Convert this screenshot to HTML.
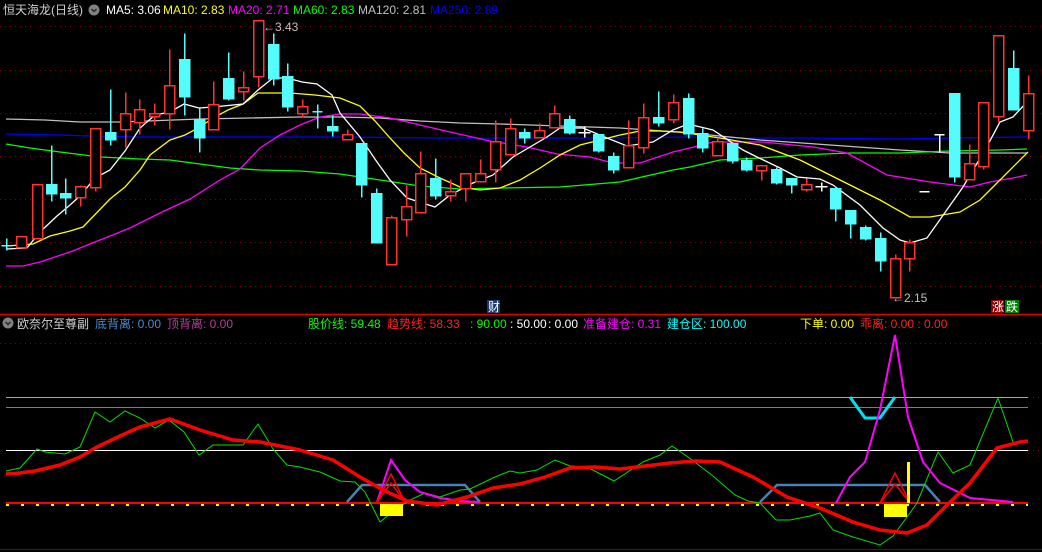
<!DOCTYPE html>
<html><head><meta charset="utf-8"><style>
html,body{margin:0;padding:0;background:#000;width:1042px;height:552px;overflow:hidden}
svg{display:block}
text{font-family:"Liberation Sans","Noto Sans CJK SC",sans-serif;font-size:12px}
</style></head><body>
<svg width="1042" height="552" viewBox="0 0 1042 552" xmlns="http://www.w3.org/2000/svg">
<rect width="1042" height="552" fill="#000"/>
<g stroke="#8a0000" stroke-width="1" stroke-dasharray="1,4">
<line x1="0" y1="26.5" x2="1042" y2="26.5"/><line x1="0" y1="70.5" x2="1042" y2="70.5"/><line x1="0" y1="113.5" x2="1042" y2="113.5"/><line x1="0" y1="156.5" x2="1042" y2="156.5"/><line x1="0" y1="199.5" x2="1042" y2="199.5"/><line x1="0" y1="242.5" x2="1042" y2="242.5"/><line x1="0" y1="286.5" x2="1042" y2="286.5"/>
<line x1="0" y1="343.5" x2="1042" y2="343.5"/><line x1="1028" y1="397.5" x2="1042" y2="397.5"/><line x1="1028" y1="450.5" x2="1042" y2="450.5"/>
</g>
<g fill="none" stroke-width="1.3">
<polyline stroke="#0000ff" points="6,134 60,135 90,136 140,137 240,137 340,137 440,138 600,138 690,137 750,138 800,138 900,139 950,138 1027,137"/>
<polyline stroke="#c0c0c0" points="6,119 45,120 80,122 120,122 200,119 250,118 300,117 340,117 380,118 420,121 460,123 500,124 560,126 620,128 690,133 760,140 830,145 900,150 950,153 1027,153"/>
<polyline stroke="#00ff00" points="6,144 30,148 60,152 100,157 140,159 170,160 200,164 230,168 260,170 300,171 340,174 380,180 420,186 460,189 500,188 560,187 620,182 673,170 690,167 720,160 760,158 800,155 850,153 900,153 950,151 1000,150 1027,149"/>
<polyline stroke="#ff00ff" points="6,266 23,266 40,262 70,252 100,240 130,228 160,213 190,199 220,180 240,169 260,148 280,135 300,125 320,117 340,114 360,114 390,118 420,125 450,132 490,141 527,147 557,154 590,157 613,163 640,163 673,152 690,148 713,142 763,142 813,147 847,153 887,175 930,182 970,187 990,182 1013,178 1027,175"/>
<polyline stroke="#ffff00" points="6,246 33,244 50,236 70,231 83,227 110,199 125,187 140,170 150,155 170,140 185,135 200,127 213,118 228,110 243,104 258,93 273,93 290,93 315,95 340,98 360,106 375,121 390,138 404,153 420,168 440,178 460,187 480,190 500,188 520,180 540,168 560,155 580,145 600,140 620,135 640,131 660,131 680,132 720,138 760,145 800,160 840,180 880,200 910,217 930,217 960,212 980,200 1000,180 1028,152"/>
<polyline stroke="#ffffff" points="6,249 27,248 40,232 57,216 70,205 80,196 95,178 110,170 125,151 140,128 155,115 170,112 184,104 199,108 213,107 243,104 258,90 273,78 287,78 302,82 317,84 332,95 340,113 360,137 377,162 390,180 407,198 435,207 450,195 473,183 493,175 513,157 530,147 547,137 560,128 583,128 607,138 627,146 653,142 673,130 688,124 713,130 743,150 757,157 780,168 797,177 820,179 833,185 860,205 883,228 900,240 910,243 927,238 963,187 985,150 1000,122 1013,117 1027,102"/>
</g>
<g stroke-width="1.5" shape-rendering="crispEdges" transform="translate(0.5,0.5)">
<g stroke="#54fcfc"><line x1="1" y1="245" x2="12" y2="245"/><line x1="6" y1="238" x2="6" y2="250"/></g>
<g stroke="#ff3232" fill="#000">
<line x1="21" y1="236" x2="21" y2="247"/><rect x="16" y="236" width="10" height="11"/>
<rect x="32" y="184" width="10" height="54"/>
<line x1="80" y1="185" x2="80" y2="206"/><rect x="75" y="186" width="10" height="11"/>
<line x1="95" y1="128" x2="95" y2="191"/><rect x="90" y="128" width="10" height="59"/>
<line x1="125" y1="92" x2="125" y2="147"/><rect x="120" y="113" width="10" height="16"/>
<line x1="139" y1="99" x2="139" y2="134"/><rect x="134" y="109" width="10" height="13"/>
<line x1="154" y1="103" x2="154" y2="125"/><rect x="149" y="113" width="10" height="3"/>
<line x1="169" y1="49" x2="169" y2="129"/><rect x="164" y="85" width="10" height="28"/>
<line x1="213" y1="81" x2="213" y2="129"/><rect x="208" y="104" width="10" height="25"/>
<line x1="243" y1="71" x2="243" y2="100"/><rect x="238" y="87" width="10" height="4"/>
<line x1="258" y1="20" x2="258" y2="87"/><rect x="253" y="20" width="10" height="56"/>
<line x1="302" y1="99" x2="302" y2="117"/><rect x="297" y="106" width="10" height="7"/>
<line x1="347" y1="129" x2="347" y2="139"/><rect x="342" y="134" width="10" height="5"/>
<line x1="391" y1="215" x2="391" y2="264"/><rect x="386" y="217" width="10" height="47"/>
<line x1="406" y1="185" x2="406" y2="236"/><rect x="401" y="206" width="10" height="13"/>
<line x1="420" y1="151" x2="420" y2="212"/><rect x="415" y="173" width="10" height="39"/>
<line x1="450" y1="179" x2="450" y2="201"/><rect x="445" y="191" width="10" height="4"/>
<line x1="465" y1="173" x2="465" y2="201"/><rect x="460" y="173" width="10" height="15"/>
<line x1="480" y1="159" x2="480" y2="181"/><rect x="475" y="173" width="10" height="8"/>
<line x1="495" y1="120" x2="495" y2="182"/><rect x="490" y="141" width="10" height="28"/>
<line x1="510" y1="118" x2="510" y2="154"/><rect x="505" y="128" width="10" height="26"/>
<line x1="539" y1="123" x2="539" y2="137"/><rect x="534" y="130" width="10" height="7"/>
<line x1="554" y1="105" x2="554" y2="127"/><rect x="549" y="113" width="10" height="14"/>
<line x1="628" y1="120" x2="628" y2="167"/><rect x="623" y="145" width="10" height="22"/>
<line x1="643" y1="103" x2="643" y2="153"/><rect x="638" y="117" width="10" height="30"/>
<line x1="673" y1="94" x2="673" y2="123"/><rect x="668" y="102" width="10" height="17"/>
<line x1="717" y1="137" x2="717" y2="155"/><rect x="712" y="141" width="10" height="14"/>
<line x1="761" y1="165" x2="761" y2="180"/><rect x="756" y="165" width="10" height="5"/>
<line x1="806" y1="178" x2="806" y2="191"/><rect x="801" y="184" width="10" height="5"/>
<line x1="895" y1="254" x2="895" y2="297"/><rect x="890" y="258" width="10" height="39"/>
<line x1="909" y1="239" x2="909" y2="271"/><rect x="904" y="242" width="10" height="16"/>
<line x1="969" y1="144" x2="969" y2="179"/><rect x="964" y="163" width="10" height="16"/>
<line x1="983" y1="102" x2="983" y2="169"/><rect x="978" y="102" width="10" height="64"/>
<line x1="998" y1="35" x2="998" y2="122"/><rect x="993" y="35" width="10" height="81"/>
<line x1="1028" y1="75" x2="1028" y2="139"/><rect x="1023" y="93" width="10" height="37"/>
</g>
<g stroke="#54fcfc" fill="#54fcfc">
<line x1="51" y1="145" x2="51" y2="201"/><rect x="46" y="184" width="10" height="9"/>
<line x1="65" y1="178" x2="65" y2="214"/><rect x="60" y="193" width="10" height="4"/>
<line x1="110" y1="89" x2="110" y2="145"/><rect x="105" y="132" width="10" height="7"/>
<line x1="184" y1="33" x2="184" y2="115"/><rect x="179" y="59" width="10" height="37"/>
<line x1="199" y1="108" x2="199" y2="152"/><rect x="194" y="119" width="10" height="18"/>
<line x1="228" y1="52" x2="228" y2="100"/><rect x="223" y="78" width="10" height="20"/>
<line x1="273" y1="33" x2="273" y2="85"/><rect x="268" y="44" width="10" height="34"/>
<line x1="287" y1="63" x2="287" y2="111"/><rect x="282" y="76" width="10" height="30"/>
<line x1="312" y1="111" x2="322" y2="111"/><line x1="317" y1="104" x2="317" y2="128"/>
<line x1="332" y1="115" x2="332" y2="136"/><rect x="327" y="126" width="10" height="4"/>
<line x1="361" y1="143" x2="361" y2="197"/><rect x="356" y="143" width="10" height="41"/>
<line x1="376" y1="188" x2="376" y2="242"/><rect x="371" y="193" width="10" height="49"/>
<line x1="435" y1="158" x2="435" y2="199"/><rect x="430" y="178" width="10" height="17"/>
<line x1="524" y1="128" x2="524" y2="143"/><rect x="519" y="132" width="10" height="5"/>
<line x1="569" y1="115" x2="569" y2="134"/><rect x="564" y="119" width="10" height="13"/>
<line x1="598" y1="134" x2="598" y2="152"/><rect x="593" y="134" width="10" height="16"/>
<line x1="613" y1="152" x2="613" y2="173"/><rect x="608" y="156" width="10" height="13"/>
<line x1="658" y1="91" x2="658" y2="126"/><rect x="653" y="117" width="10" height="5"/>
<line x1="688" y1="93" x2="688" y2="138"/><rect x="683" y="98" width="10" height="35"/>
<line x1="702" y1="128" x2="702" y2="152"/><rect x="697" y="133" width="10" height="14"/>
<line x1="732" y1="143" x2="732" y2="163"/><rect x="727" y="143" width="10" height="17"/>
<line x1="746" y1="157" x2="746" y2="171"/><rect x="741" y="160" width="10" height="9"/>
<line x1="776" y1="167" x2="776" y2="184"/><rect x="771" y="169" width="10" height="13"/>
<line x1="791" y1="178" x2="791" y2="193"/><rect x="786" y="178" width="10" height="6"/>
<line x1="835" y1="186" x2="835" y2="221"/><rect x="830" y="188" width="10" height="20"/>
<line x1="850" y1="210" x2="850" y2="238"/><rect x="845" y="210" width="10" height="13"/>
<line x1="865" y1="225" x2="865" y2="240"/><rect x="860" y="227" width="10" height="11"/>
<line x1="880" y1="232" x2="880" y2="271"/><rect x="875" y="238" width="10" height="22"/>
<line x1="954" y1="93" x2="954" y2="182"/><rect x="949" y="93" width="10" height="83"/>
<line x1="1013" y1="50" x2="1013" y2="109"/><rect x="1008" y="68" width="10" height="41"/>
</g>
<g stroke="#ffffff">
<line x1="578" y1="132" x2="590" y2="132"/><line x1="584" y1="126" x2="584" y2="137"/>
<line x1="815" y1="186" x2="827" y2="186"/><line x1="821" y1="182" x2="821" y2="191"/>
<line x1="919" y1="191" x2="929" y2="191"/>
<line x1="934" y1="134" x2="944" y2="134"/><line x1="939" y1="134" x2="939" y2="152"/>
</g>
</g>
<g fill="#c0c0c0" stroke="none">
<text x="263" y="31" font-size="11">←3.43</text>
<text x="892" y="302" font-size="11">←2.15</text>
</g>
<rect x="487" y="300" width="13" height="13" fill="#1a3a70"/>
<text x="488" y="311" fill="#fff" font-size="11">财</text>
<rect x="991" y="300" width="13" height="13" fill="#900000"/>
<text x="992" y="311" fill="#fff" font-size="11">涨</text>
<rect x="1005" y="300" width="14" height="13" fill="#008000"/>
<text x="1006" y="311" fill="#fff" font-size="11">跌</text>
<text x="3" y="14" fill="#d0d0d0" font-size="13">恒天海龙(日线)</text>
<circle cx="94" cy="10" r="5.5" fill="#808080"/>
<path d="M91.5,9 L94,11.5 L96.5,9" stroke="#222" stroke-width="1.3" fill="none"/>
<text x="106" y="14" fill="#ffffff">MA5: 3.06</text>
<text x="163" y="14" fill="#ffff00">MA10: 2.83</text>
<text x="228" y="14" fill="#ff00ff">MA20: 2.71</text>
<text x="293" y="14" fill="#00ff00">MA60: 2.83</text>
<text x="358" y="14" fill="#c0c0c0">MA120: 2.81</text>
<text x="430" y="14" fill="#0000ff">MA250: 2.89</text>
<line x1="0" y1="314.5" x2="1042" y2="314.5" stroke="#e00000" stroke-width="1.5"/>
<line x1="0" y1="549.5" x2="1042" y2="549.5" stroke="#8a0000" stroke-width="1"/>
<circle cx="8" cy="323" r="5.5" fill="#808080"/>
<path d="M5.5,322 L8,324.5 L10.5,322" stroke="#222" stroke-width="1.3" fill="none"/>
<text x="17" y="328" fill="#d0d0d0">欧奈尔至尊副</text>
<text x="95" y="328" fill="#4a8ac8">底背离: 0.00</text>
<text x="167" y="328" fill="#b0409a">顶背离: 0.00</text>
<text x="308" y="328" fill="#00ff00">股价线: 59.48</text>
<text x="387" y="328" fill="#ff2020">趋势线: 58.33</text>
<text x="470" y="328" fill="#00ff00">: 90.00</text>
<text x="510" y="328" fill="#ffffff">: 50.00</text>
<text x="548" y="328" fill="#ffffff">: 0.00</text>
<text x="583" y="328" fill="#ff00ff">准备建仓: 0.31</text>
<text x="667" y="328" fill="#00ffff">建仓区: 100.00</text>
<text x="800" y="328" fill="#ffff00">下单: 0.00</text>
<text x="860" y="328" fill="#ff2020">乖离: 0.00 : 0.00</text>
<line x1="6" y1="397.5" x2="1028" y2="397.5" stroke="#40d0e0" stroke-width="1"/>
<line x1="6" y1="407.5" x2="1028" y2="407.5" stroke="#20c020" stroke-width="1"/>
<line x1="6" y1="450.5" x2="1028" y2="450.5" stroke="#ffffff" stroke-width="1"/>
<line x1="6" y1="505" x2="1028" y2="505" stroke="#ffff00" stroke-width="2" stroke-dasharray="3,12"/>
<line x1="6" y1="503" x2="1028" y2="503" stroke="#ff0000" stroke-width="2"/>
<g fill="none" stroke="#4682b4" stroke-width="2.5">
<polyline points="347,502 362,485 465,485 480,502"/>
<polyline points="760,502 777,485 925,485 940,502"/>
</g>
<polyline fill="none" stroke="#00e000" stroke-width="1" points="6,471 20,468 37,449 45,452 65,454 80,447 95,412 110,422 125,411 140,418 155,428 169,420 184,432 199,455 213,445 243,445 258,424 273,449 287,465 300,467 320,472 340,481 355,482 365,492 380,522 395,510 410,500 425,493 440,497 460,490 470,489 495,477 510,471 520,473 537,470 555,460 570,466 587,467 614,481 643,462 660,455 672,446 688,457 713,476 735,495 748,501 760,503 776,520 790,520 810,516 820,513 833,530 853,537 880,545 893,536 907,517 917,503 938,452 953,473 970,465 998,398 1013,442"/>
<polyline fill="none" stroke="#00e0f0" stroke-width="3" points="850,397 865,418 880,418 895,397"/>
<g fill="none" stroke="#ff00ff" stroke-width="2">
<polyline points="377,502 391,460 405,480 420,492 440,498 460,501 480,502"/>
<polyline points="836,503 850,477 865,462 880,410 895,335 908,417 923,462 940,483 970,498 1013,502"/>
</g>
<polyline fill="none" stroke="#ff0000" stroke-width="3.5" stroke-linejoin="round" points="6,474 20,473 35,471 60,465 80,457 97,447 120,436 140,427 170,419 200,430 233,440 260,442 300,450 333,460 360,477 383,490 407,501 437,505 467,497 493,488 520,484 545,477 570,468 595,467 620,469 645,466 670,463 695,461 720,462 753,477 787,497 820,508 853,522 880,530 907,533 927,525 947,505 970,483 997,448 1020,442 1028,441"/>
<g fill="none" stroke="#ff0000" stroke-width="1.5">
<polyline points="377,502 391,474 405,502"/><polyline points="377,502 391,483 405,502"/>
<polyline points="880,503 895,473 910,503"/><polyline points="880,503 895,484 910,503"/>
</g>
<rect x="380" y="504" width="23" height="12" fill="#ffff00"/>
<rect x="884" y="504" width="23" height="13" fill="#ffff00"/>
<rect x="907" y="462" width="3" height="41" fill="#ffff00"/>
</svg>
</body></html>
